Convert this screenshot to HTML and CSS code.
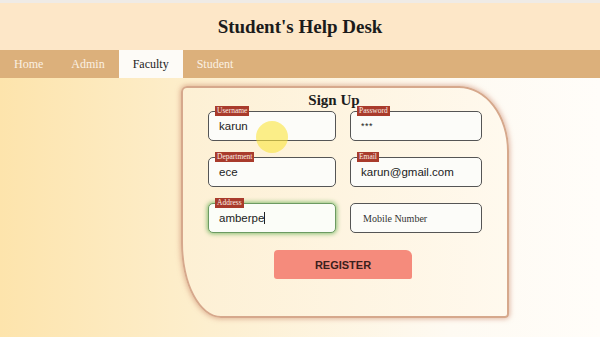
FILE: index.html
```html
<!DOCTYPE html>
<html lang="en">
<head>
    <meta charset="UTF-8">
    <title>Student's Help Desk</title>
    <link rel="stylesheet" href="styles.css">
</head>
<body>
    <div id="header">
        <h1>Student's Help Desk</h1>
    </div>
    <div id="nav">
        <a href="#">Home</a>
        <a href="#">Admin</a>
        <a href="#" class="active">Faculty</a>
        <a href="#">Student</a>
    </div>
    <div id="main">
        <div id="card">
            <h2>Sign Up</h2>
            <div id="fields">
                <div class="field">
                    <span class="tag">Username</span>
                    <div class="box">karun</div>
                </div>
                <div class="field">
                    <span class="tag">Password</span>
                    <div class="box secret">***</div>
                </div>
                <div class="field">
                    <span class="tag">Department</span>
                    <div class="box">ece</div>
                </div>
                <div class="field">
                    <span class="tag">Email</span>
                    <div class="box">karun@gmail.com</div>
                </div>
                <div class="field">
                    <span class="tag">Address</span>
                    <div class="box focus">amberpe<span class="caret"></span></div>
                </div>
                <div class="field">
                    <div class="box empty">Mobile Number</div>
                </div>
            </div>
            <button id="register">REGISTER</button>
        </div>
    </div>
    <span id="pointer"></span>
</body>
</html>
```
FILE: styles.css
```css
body {
    margin: 0;
    height: 337px;
    overflow: hidden;
    background: linear-gradient(to right, #fde4ac, #fdefcf 35%, #fefaf2 75%, #fffdf9);
    font-family: "Liberation Serif", serif;
}
#header {
    border-top: 3px solid #efebe6;
    height: 47px;
    background: #fde7c8;
    display: flex;
    align-items: center;
    justify-content: center;
}
#header h1 {
    margin: 0;
    font-size: 19px;
    color: #1b1b1b;
}
#nav {
    display: flex;
    height: 28px;
    background: #dcb07b;
}
#nav a {
    display: flex;
    align-items: center;
    padding: 0 14px;
    font-size: 12px;
    color: #fbf1e3;
    text-decoration: none;
}
#nav a.active {
    background: #fdfbf7;
    color: #222;
}
#main {
    display: flex;
    padding: 8px 0 0 181px;
}
#card {
    box-sizing: border-box;
    width: 328px;
    height: 232px;
    border: 2px solid #d6a88c;
    border-radius: 6px 50px 4px 40px / 6px 65px 4px 75px;
    box-shadow: 0 0 5px 1px rgba(200, 130, 100, 0.55);
    background: linear-gradient(to right, #fdf0d4, #fff9ee);
    padding: 3px 24px 0 24px;
    display: flex;
    flex-direction: column;
    align-items: center;
}
#card h2 {
    margin: 0 22px 1px 0;
    font-size: 15px;
    line-height: 19px;
    color: #1c1c1c;
}
#fields {
    display: grid;
    grid-template-columns: 128px 132px;
    column-gap: 14px;
    row-gap: 16px;
}
.field { position: relative; }
.box {
    box-sizing: border-box;
    height: 30px;
    border: 1px solid #555;
    border-radius: 5px;
    background: #fcfcf9;
    padding: 0 10px;
    display: flex;
    align-items: center;
    font-family: "Liberation Sans", sans-serif;
    font-size: 11.5px;
    color: #222;
}
.box.secret { font-size: 9px; letter-spacing: 0.5px; }
.box.focus {
    border-color: #6c9a62;
    box-shadow: 0 0 4px 1px rgba(110, 180, 90, 0.8);
    background: #fbfdf8;
}
.box.empty {
    font-family: "Liberation Serif", serif;
    font-size: 10px;
    color: #333;
    padding-left: 12px;
}
.caret {
    display: inline-block;
    width: 1px;
    height: 12px;
    background: #222;
}
.tag {
    position: absolute;
    left: 7px;
    top: -5px;
    padding: 0 2px;
    height: 10px;
    line-height: 10px;
    font-size: 7.5px;
    color: #fbeee6;
    background: #a93b2c;
}
#register {
    margin: 17px 4px 0 0;
    width: 138px;
    height: 29px;
    border: none;
    border-radius: 4px 6px 2px 3px;
    background: #f58b7c;
    font-family: "Liberation Sans", sans-serif;
    font-weight: bold;
    font-size: 11px;
    color: #3a1f1c;
}
#pointer {
    position: absolute;
    left: 256px;
    top: 121px;
    width: 32px;
    height: 32px;
    border-radius: 50%;
    background: rgba(250, 228, 60, 0.6);
}
```
